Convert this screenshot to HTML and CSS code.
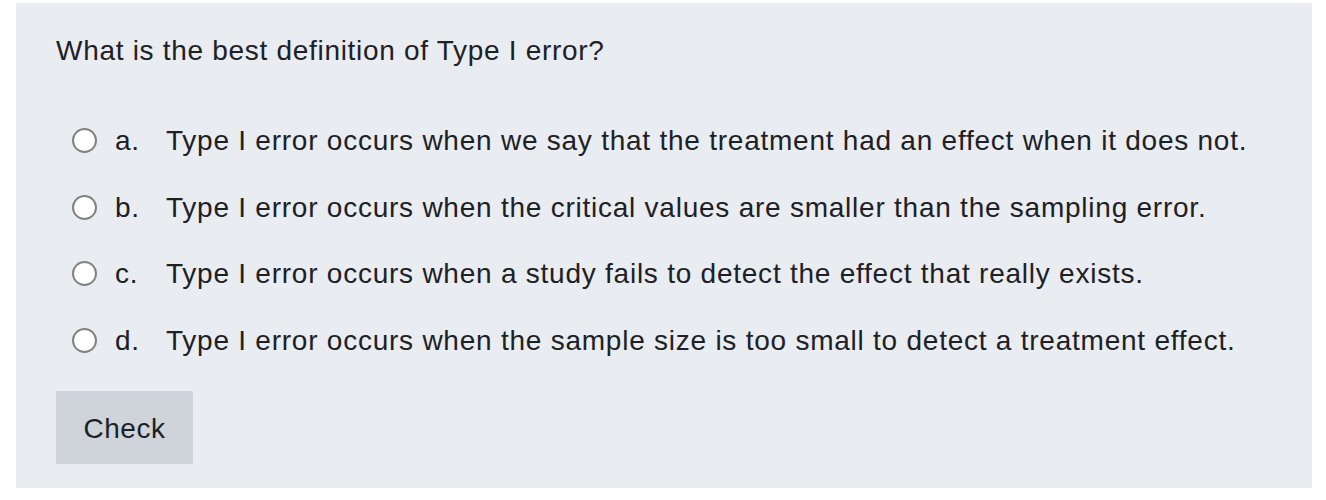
FILE: index.html
```html
<!DOCTYPE html>
<html lang="en">
<head>
<meta charset="utf-8">
<title>Quiz</title>
<link rel="stylesheet" href="styles.css">
</head>
<body>
<div class="que">
  <div class="qtext">What is the best definition of Type I error?</div>
  <div class="answers">
    <label class="opt"><span class="radio"></span><span class="letter">a.</span><span class="atext">Type I error occurs when we say that the treatment had an effect when it does not.</span></label>
    <label class="opt"><span class="radio"></span><span class="letter">b.</span><span class="atext">Type I error occurs when the critical values are smaller than the sampling error.</span></label>
    <label class="opt"><span class="radio"></span><span class="letter">c.</span><span class="atext">Type I error occurs when a study fails to detect the effect that really exists.</span></label>
    <label class="opt"><span class="radio"></span><span class="letter">d.</span><span class="atext">Type I error occurs when the sample size is too small to detect a treatment effect.</span></label>
  </div>
  <button class="check">Check</button>
</div>
</body>
</html>
```
FILE: styles.css
```css
html, body {
  margin: 0;
  padding: 0;
  background: #ffffff;
}
body {
  font-family: "Liberation Sans", Arial, sans-serif;
  color: #1d2125;
  letter-spacing: 0.7px;
}
.que {
  margin: 3px 14px 0 16px;
  height: 485px;
  box-sizing: border-box;
  background: #e9ecf1;
  padding: 28px 40px 0 40px;
  display: flex;
  flex-direction: column;
  align-items: flex-start;
}
.qtext {
  font-size: 28px;
  line-height: 39px;
}
.answers {
  margin-top: 37px;
  display: flex;
  flex-direction: column;
}
.opt {
  display: flex;
  align-items: center;
  height: 66.7px;
  font-size: 28px;
  line-height: 39px;
  letter-spacing: 0.76px;
}
.radio {
  width: 25px;
  height: 25px;
  box-sizing: border-box;
  border: 2px solid #828282;
  border-radius: 50%;
  background: #ffffff;
  margin-left: 16px;
  margin-right: 18px;
  flex: none;
}
.letter {
  width: 51px;
  flex: none;
}
.check {
  margin-top: 17px;
  width: 137px;
  height: 73px;
  border: none;
  border-radius: 0;
  background: #ced4da;
  color: #1d2125;
  font-family: "Liberation Sans", Arial, sans-serif;
  font-size: 28px;
  letter-spacing: 0.5px;
  padding: 3px 0 0 0;
}
```
